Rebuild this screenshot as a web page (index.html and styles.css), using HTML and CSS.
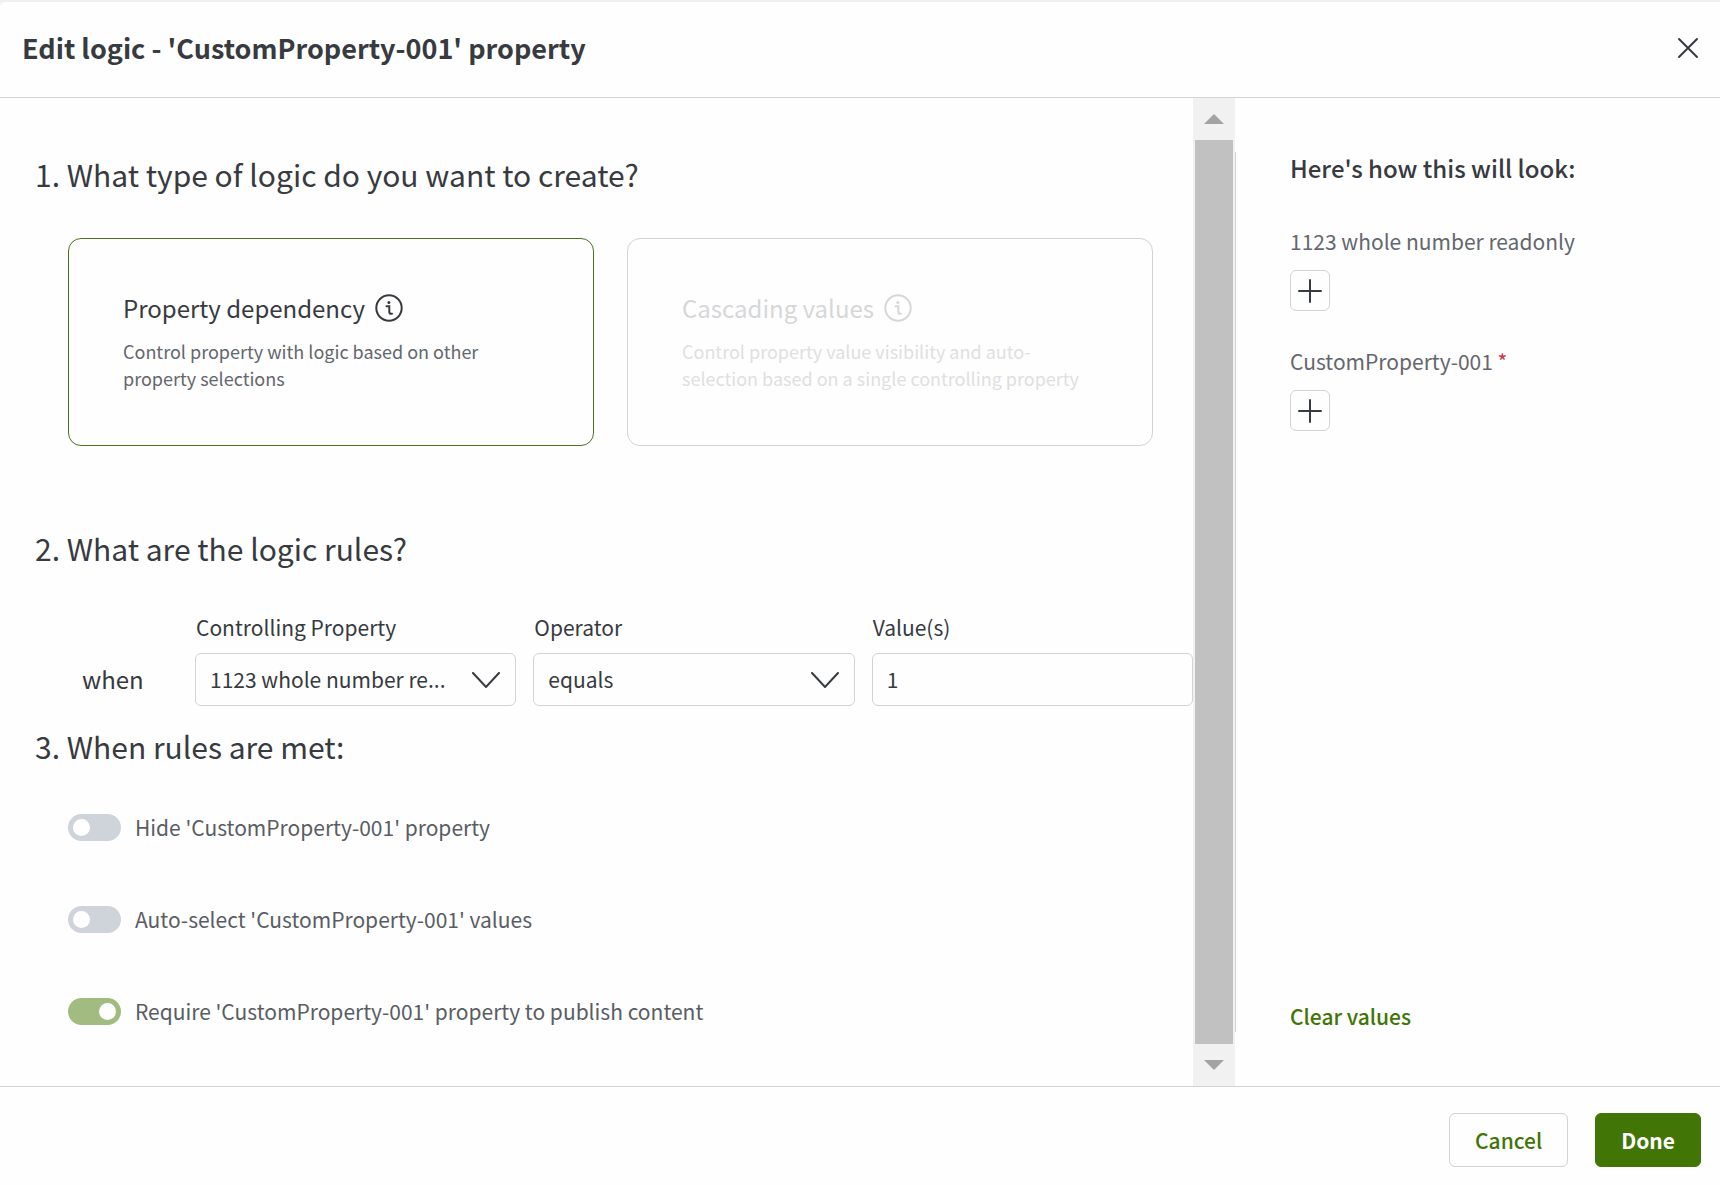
FILE: index.html
```html
<!DOCTYPE html>
<html lang="en">
<head>
    <meta charset="UTF-8">
    <meta name="viewport" content="width=device-width, initial-scale=1.0">
    <title>Edit logic</title>
    <link rel="stylesheet" href="styles.css">
</head>
<body>
    <div class="dialog" role="dialog" aria-labelledby="dialogTitle">
        <header class="dialog-header">
            <h1 id="dialogTitle">Edit logic - 'CustomProperty-001' property</h1>
            <button type="button" class="close" aria-label="Close">
                <svg width="22" height="22" viewBox="0 0 22 22"><path d="M2 2L20 20M20 2L2 20"/></svg>
            </button>
        </header>

        <div class="dialog-body">
            <main class="content">
                <!-- Logic type -->
                <section class="type-section">
                    <h2>1. What type of logic do you want to create?</h2>
                    <div class="cards">
                        <button type="button" class="card selected">
                            <span class="card-title">Property dependency
                                <svg class="info" width="28" height="28" viewBox="0 0 28 28"><circle cx="14" cy="14" r="12.7"/><path d="M11.5 12.3h2.8v5.6q0 1.8 1.8 1.8h.9"/><circle class="dot" cx="13.9" cy="8.5" r="1.5"/></svg>
                            </span>
                            <span class="card-text">Control property with logic based on other property selections</span>
                        </button>
                        <button type="button" class="card" disabled>
                            <span class="card-title">Cascading values
                                <svg class="info" width="28" height="28" viewBox="0 0 28 28"><circle cx="14" cy="14" r="12.7"/><path d="M11.5 12.3h2.8v5.6q0 1.8 1.8 1.8h.9"/><circle class="dot" cx="13.9" cy="8.5" r="1.5"/></svg>
                            </span>
                            <span class="card-text">Control property value visibility and auto-selection based on a single controlling property</span>
                        </button>
                    </div>
                </section>

                <!-- Rules -->
                <section class="rules-section">
                    <h2>2. What are the logic rules?</h2>
                    <div class="rule">
                        <span class="when">when</span>
                        <div class="field">
                            <label for="controlling">Controlling Property</label>
                            <div class="select-box">
                                <select id="controlling">
                                    <option>1123 whole number re...</option>
                                </select>
                                <svg class="chevron" width="28" height="16" viewBox="0 0 28 16"><path d="M1 1L14 15L27 1"/></svg>
                            </div>
                        </div>
                        <div class="field">
                            <label for="operator">Operator</label>
                            <div class="select-box">
                                <select id="operator">
                                    <option>equals</option>
                                </select>
                                <svg class="chevron" width="28" height="16" viewBox="0 0 28 16"><path d="M1 1L14 15L27 1"/></svg>
                            </div>
                        </div>
                        <div class="field">
                            <label for="values">Value(s)</label>
                            <input type="text" id="values" value="1">
                        </div>
                    </div>
                </section>

                <!-- Actions -->
                <section class="actions-section">
                    <h2>3. When rules are met:</h2>
                    <div class="toggles">
                        <label class="toggle"><input type="checkbox"> Hide 'CustomProperty-001' property</label>
                        <label class="toggle"><input type="checkbox"> Auto-select 'CustomProperty-001' values</label>
                        <label class="toggle"><input type="checkbox" checked> Require 'CustomProperty-001' property to publish content</label>
                    </div>
                </section>
            </main>

            <div class="scrollbar" aria-hidden="true">
                <div class="scroll-arrow"><svg width="20" height="10" viewBox="0 0 20 10"><path d="M0 10L10 0L20 10z"/></svg></div>
                <div class="scroll-thumb"></div>
                <div class="scroll-arrow"><svg width="20" height="10" viewBox="0 0 20 10"><path d="M0 0L10 10L20 0z"/></svg></div>
            </div>

            <aside class="preview">
                <div class="preview-inner">
                    <h3>Here's how this will look:</h3>
                    <div class="preview-item">
                        <span>1123 whole number readonly</span>
                        <button type="button" class="add" aria-label="Add 1123 whole number readonly">
                            <svg width="24" height="24" viewBox="0 0 24 24"><path d="M12 1V23M1 12H23"/></svg>
                        </button>
                    </div>
                    <div class="preview-item">
                        <span>CustomProperty-001 <span class="required">*</span></span>
                        <button type="button" class="add" aria-label="Add CustomProperty-001">
                            <svg width="24" height="24" viewBox="0 0 24 24"><path d="M12 1V23M1 12H23"/></svg>
                        </button>
                    </div>
                    <button type="button" class="clear">Clear values</button>
                </div>
            </aside>
        </div>

        <footer class="dialog-footer">
            <button type="button" class="btn">Cancel</button>
            <button type="button" class="btn primary">Done</button>
        </footer>
    </div>
</body>
</html>
```

FILE: styles.css
```css
/* Reset */
* {
    margin: 0;
    padding: 0;
    box-sizing: border-box;
}

body {
    font-family: "Noto Sans CJK SC", "Noto Sans", sans-serif;
    font-size: 21px;
    line-height: 28px;
    color: #373a3f;
    background-color: #f0f0f0;
}

button,
input,
select {
    font: inherit;
    color: inherit;
    background: none;
    border: none;
}

button {
    cursor: pointer;
}

svg {
    display: block;
    flex: none;
    fill: none;
    stroke: currentColor;
    stroke-width: 2;
    stroke-linecap: round;
}

.dialog {
    display: flex;
    flex-direction: column;
    min-height: 100vh;
    border-top: 2px solid #f0f0f0;
    border-radius: 6px 0 0 0;
    background-color: #fefefe;
}

/* Header */
.dialog-header {
    display: flex;
    justify-content: space-between;
    align-items: center;
    padding: 26px 21px 29px 22px;
    border-bottom: 1px solid #d2d3d5;
}

h1 {
    font-size: 27px;
    line-height: 40px;
    font-weight: 700;
}

.dialog-body {
    display: grid;
    grid-template-columns: 1fr 42px 485px;
    flex: 1;
}

/* Left side */
.content {
    min-width: 0;
    padding: 54px 0 40px 35px;
}

h2 {
    font-size: 30px;
    line-height: 44px;
    font-weight: 400;
}

.cards {
    display: grid;
    grid-template-columns: 1fr 1fr;
    gap: 33px;
    padding: 42px 40px 0 33px;
}

.card {
    display: flex;
    flex-direction: column;
    gap: 12px;
    padding: 51px 54px 53px;
    border: 1px solid #d2d3d5;
    border-radius: 13px;
    text-align: left;
}

.card.selected {
    border-color: #4a7320;
}

.card:disabled {
    color: #d6d7d9;
    cursor: default;
}

.card-title {
    display: flex;
    align-items: center;
    gap: 10px;
    font-size: 24px;
    line-height: 36px;
}

.info .dot {
    fill: currentColor;
    stroke: none;
}

.card-text {
    font-size: 18px;
    line-height: 27px;
    color: #63676d;
}

.card:disabled .card-text {
    color: #dfe0e1;
}

/* Rules */
.rules-section {
    padding-top: 80px;
}

.rule {
    display: flex;
    align-items: flex-end;
    gap: 17px;
    padding: 43px 0 0 47px;
}

.when {
    width: 96px;
    font-size: 24px;
    line-height: 54px;
}

.field {
    display: flex;
    flex: 1;
    flex-direction: column;
    gap: 12px;
    min-width: 0;
}

.field label {
    padding-left: 1px;
}

.select-box {
    display: grid;
    align-items: center;
}

.field select,
.field input {
    width: 100%;
    height: 53px;
    padding: 0 14px 2px;
    border: 1px solid #d2d3d5;
    border-radius: 6px;
}

.field select {
    grid-area: 1 / 1;
    padding-right: 60px;
    appearance: none;
    overflow: hidden;
    text-overflow: ellipsis;
}

.chevron {
    grid-area: 1 / 1;
    justify-self: end;
    margin-right: 16px;
    pointer-events: none;
}

/* Toggles */
.actions-section {
    padding-top: 18px;
}

.toggles {
    display: flex;
    flex-direction: column;
    gap: 64px;
    padding: 45px 0 0 33px;
}

.toggle {
    display: flex;
    align-items: center;
    gap: 14px;
    color: #595d63;
}

.toggle input {
    display: flex;
    align-items: center;
    width: 53px;
    height: 27px;
    padding: 0 5px;
    border-radius: 14px;
    background-color: #cfd3da;
    appearance: none;
}

.toggle input::before {
    content: "";
    width: 17px;
    height: 17px;
    border-radius: 50%;
    background-color: #fff;
}

.toggle input:checked {
    justify-content: flex-end;
    background-color: #a1bb81;
}

/* Scrollbar */
.scrollbar {
    display: flex;
    flex-direction: column;
    background-color: #f1f1f1;
}

.scroll-arrow {
    display: flex;
    align-items: center;
    justify-content: center;
    height: 42px;
}

.scroll-arrow svg {
    fill: #a3a3a3;
    stroke: none;
}

.scroll-thumb {
    flex: 1;
    margin: 0 2px;
    background-color: #c1c1c1;
}

/* Preview */
.preview {
    display: flex;
    padding: 54px 0;
}

.preview-inner {
    display: flex;
    flex: 1;
    flex-direction: column;
    align-items: flex-start;
    padding-left: 54px;
    border-left: 1px solid #d2d3d5;
    color: #63676d;
}

h3 {
    font-size: 24px;
    line-height: 32px;
    font-weight: 500;
    color: #373a3f;
    margin-bottom: 43px;
}

.preview-item {
    display: flex;
    flex-direction: column;
    gap: 15px;
    margin-bottom: 36px;
}

.required {
    color: #cc334c;
}

.add {
    display: flex;
    align-items: center;
    justify-content: center;
    width: 40px;
    height: 41px;
    border: 1px solid #d2d3d5;
    border-radius: 6px;
    color: #373a3f;
}

.clear {
    margin-top: auto;
    padding-bottom: 2px;
    font-weight: 500;
    color: #417505;
}

/* Footer */
.dialog-footer {
    display: flex;
    justify-content: flex-end;
    gap: 27px;
    padding: 26px 19px 18px;
    border-top: 1px solid #cfd3d6;
}

.btn {
    height: 54px;
    padding: 0 25px 1px;
    border: 1px solid #cfd3d6;
    border-radius: 6px;
    font-weight: 500;
    color: #417505;
}

.btn.primary {
    border-color: #417505;
    background-color: #417505;
    font-weight: 700;
    color: #fff;
}
```
